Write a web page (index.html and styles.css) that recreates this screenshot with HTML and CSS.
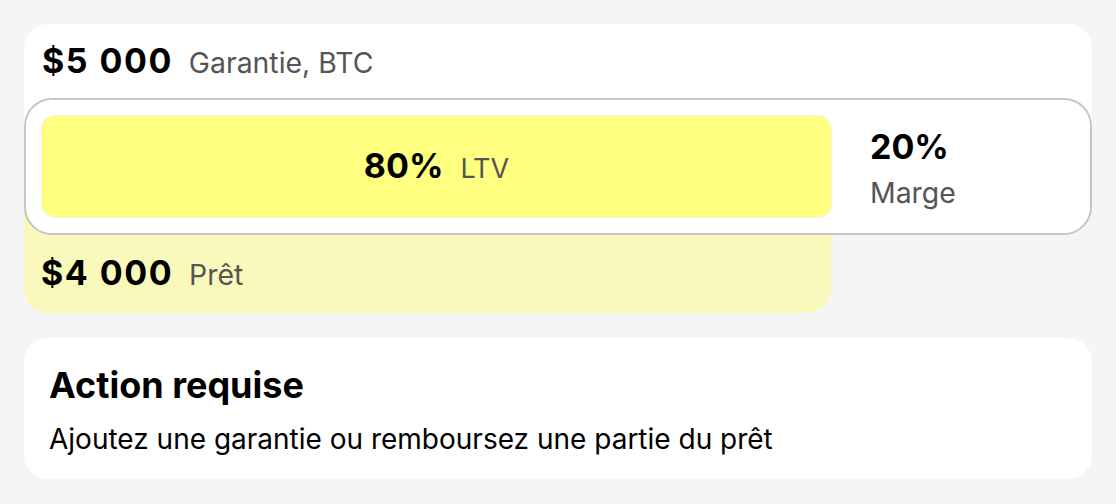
FILE: index.html
```html
<!DOCTYPE html>
<html lang="fr">
<head>
<meta charset="utf-8">
<title>Position</title>
<link rel="stylesheet" href="styles.css">
</head>
<body>
<main class="page">
  <section class="position">
    <div class="collateral">
      <span class="value amount">$5 000</span>
      <span class="label">Garantie, BTC</span>
    </div>
    <div class="ltv-box">
      <div class="ltv-bar">
        <span class="value">80%</span>
        <span class="label small">LTV</span>
      </div>
      <div class="margin">
        <span class="value">20%</span>
        <span class="label">Marge</span>
      </div>
    </div>
    <div class="loan">
      <span class="value amount">$4 000</span>
      <span class="label">Prêt</span>
    </div>
  </section>
  <section class="action">
    <h2 class="action-title">Action requise</h2>
    <p class="action-text">Ajoutez une garantie ou remboursez une partie du prêt</p>
  </section>
</main>
</body>
</html>
```

FILE: styles.css
```css
* { box-sizing: border-box; }
html, body { margin: 0; padding: 0; }
body {
  background: #f5f5f5;
  font-family: Inter, "Noto Sans", sans-serif;
  color: #000;
}
.page {
  padding: 24px;
  display: flex;
  flex-direction: column;
  gap: 25px;
}
.position {
  display: flex;
  flex-direction: column;
}
.value {
  font-size: 34px;
  font-weight: 700;
  line-height: 40px;
  white-space: nowrap;
}
.value.amount { letter-spacing: 1.5px; word-spacing: 1px; }
.label {
  font-size: 28.4px;
  font-weight: 400;
  color: #555;
  line-height: 32px;
}
.label.small { font-size: 27px; }
.collateral {
  background: #fff;
  border-radius: 24px 24px 0 0;
  height: 142px;
  padding: 17px 0 0 18px;
  display: flex;
  align-items: baseline;
  gap: 16px;
}
.ltv-box {
  position: relative;
  z-index: 1;
  margin-top: -68px;
  height: 137px;
  background: #fff;
  border: 2px solid #c6c6c6;
  border-radius: 28px;
  padding: 15px 15px;
  display: flex;
  align-items: flex-start;
}
.ltv-bar {
  width: 791px;
  height: 103px;
  flex: none;
  background: #ffff80;
  border: 1px solid #f2f2e6;
  border-radius: 14px;
  display: flex;
  align-items: baseline;
  justify-content: center;
  gap: 17px;
  padding-top: 30px;
}
.margin {
  margin-left: 38px;
  padding-top: 12px;
  display: flex;
  flex-direction: column;
  gap: 10px;
}
.loan {
  width: 807px;
  margin-top: -68px;
  padding: 86px 0 0 17px;
  height: 146px;
  background: #f9f9bb;
  border-radius: 0 0 24px 24px;
  display: flex;
  align-items: baseline;
  gap: 16px;
}
.action {
  background: #fff;
  border-radius: 24px;
  height: 141px;
  padding: 25px 25px 0;
}
.action-title {
  margin: 0;
  font-size: 36px;
  font-weight: 700;
  line-height: 44px;
}
.action-text {
  margin: 16px 0 0;
  font-size: 28px;
  line-height: 32px;
}
```
